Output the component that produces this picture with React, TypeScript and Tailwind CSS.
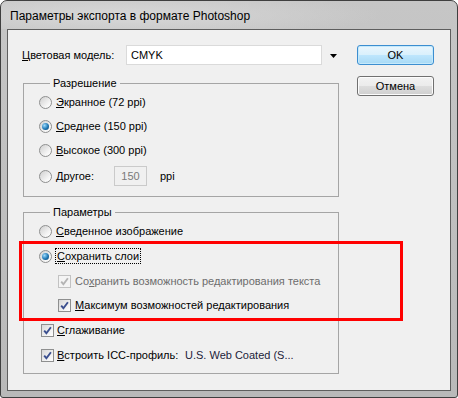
import React from 'react'

const font = { fontFamily: '"Liberation Sans", Arial, sans-serif' }

function Radio({ on }: { on?: boolean }) {
  return (
    <span className="flex h-[13px] w-[13px] shrink-0 items-center justify-center rounded-full border border-[#8e8f8f] bg-[linear-gradient(135deg,#cfcfcf,#f6f6f6_70%,#ffffff)]">
      {on && (
        <span className="h-[7px] w-[7px] rounded-full bg-[radial-gradient(circle_at_35%_35%,#9edcff,#1f78b4_55%,#0b3a63)]" />
      )}
    </span>
  )
}

function Check({ disabled }: { disabled?: boolean }) {
  return (
    <span
      className={`flex h-[13px] w-[13px] shrink-0 items-center justify-center border ${
        disabled
          ? 'border-[#c2c2c2] bg-[#f4f4f4]'
          : 'border-[#8e8f8f] bg-[linear-gradient(135deg,#d8d8d8,#f4f4f4_70%,#ffffff)]'
      }`}
    >
      <svg width="9" height="9" viewBox="0 0 9 9">
        <path
          d="M1.2 4.6 L3.4 7.2 L7.9 1.2"
          fill="none"
          stroke={disabled ? '#b4b4b4' : '#3b4f8f'}
          strokeWidth="1.9"
        />
      </svg>
    </span>
  )
}

function Group({ title, children }: { title: string; children: React.ReactNode }) {
  return (
    <fieldset className="w-[316px] border border-[#a5a5a5] pl-[15px]">
      <legend className="ml-[11px] px-[3px] text-[11px] leading-[14px]">{title}</legend>
      {children}
    </fieldset>
  )
}

export default function App() {
  return (
    <div style={font} className="h-[398px] w-[458px] bg-white text-[11px] text-black">
      <div className="flex h-[398px] w-[458px] flex-col rounded-t-[7px] rounded-b-[3px] border border-[#3f3f3f] bg-[linear-gradient(180deg,#c6c6c6,#b9b9b9)]">
        {/* Title bar */}
        <div className="flex h-[28px] items-center pl-[9px] pt-[2px] text-[12px] text-black bg-[radial-gradient(ellipse_260px_24px_at_120px_14px,#d8d8d8,transparent)] rounded-t-[6px]">
          Параметры экспорта в формате Photoshop
        </div>

        {/* Client area */}
        <div className="relative mx-[6px] mb-[6px] flex h-[362px] border border-[#5e5e5e] bg-[#f0f0f0]">
          {/* Left column */}
          <div className="flex w-[345px] flex-col">
            <div className="mt-[15px] flex h-[20px] items-center pl-[14px]">
              <span className="w-[104px]">
                <u>Ц</u>ветовая модель:
              </span>
              <div className="flex h-[20px] w-[196px] items-center border border-[#dadada] bg-white pl-[4px]">
                CMYK
              </div>
              <svg width="7" height="4" viewBox="0 0 7 4" className="ml-[8px] mt-[2px]">
                <path d="M0 0 H7 L3.5 4 Z" fill="#000" />
              </svg>
            </div>

            <div className="ml-[15px] mt-[11px]">
              <Group title="Разрешение">
                <label className="flex h-[24px] items-center gap-[4px]">
                  <Radio />
                  <span>
                    <u>Э</u>кранное (72 ppi)
                  </span>
                </label>
                <label className="flex h-[24px] items-center gap-[4px]">
                  <Radio on />
                  <span>
                    <u>С</u>реднее (150 ppi)
                  </span>
                </label>
                <label className="flex h-[24px] items-center gap-[4px]">
                  <Radio />
                  <span>
                    <u>В</u>ысокое (300 ppi)
                  </span>
                </label>
                <div className="flex h-[28px] items-center gap-[4px]">
                  <Radio />
                  <span className="w-[54px]">
                    <u>Д</u>ругое:
                  </span>
                  <div className="flex h-[20px] w-[33px] items-center justify-center border border-[#cacaca] text-[#7a7a7a]">
                    150
                  </div>
                  <span className="ml-[9px]">ppi</span>
                </div>
                <div className="h-[6px]" />
              </Group>
            </div>

            <div className="ml-[15px] mt-[8px]">
              <Group title="Параметры">
                <label className="flex h-[24px] items-center gap-[4px]">
                  <Radio />
                  <span>
                    <u>С</u>веденное изображение
                  </span>
                </label>
                <label className="flex h-[26px] items-center gap-[3px]">
                  <Radio on />
                  <span className="border border-dotted border-black px-[1px] leading-[14px]">
                    <u>С</u>охранить слои
                  </span>
                </label>
                <label className="flex h-[25px] items-center gap-[4px] pl-[19px] text-[#6d6d6d]">
                  <Check disabled />
                  <span>
                    Со<u>х</u>ранить возможность редактирования текста
                  </span>
                </label>
                <label className="flex h-[23px] items-center gap-[4px] pl-[19px]">
                  <Check />
                  <span>
                    <u>М</u>аксимум возможностей редактирования
                  </span>
                </label>
                <label className="flex h-[27px] items-center gap-[3px] pl-[2px]">
                  <Check />
                  <span>
                    <u>С</u>глаживание
                  </span>
                </label>
                <div className="flex h-[23px] items-center gap-[3px] pl-[2px]">
                  <Check />
                  <span className="w-[125px]">
                    <u>В</u>строить ICC-профиль:
                  </span>
                  <span className="text-[#1c1c3a]">U.S. Web Coated (S...</span>
                </div>
                <div className="h-[6px]" />
              </Group>
            </div>
          </div>

          {/* Right column */}
          <div className="ml-[4px] mt-[15px] flex w-[77px] flex-col gap-[11px]">
            <button className="h-[20px] rounded-[3px] border border-[#3c8ed0] bg-[linear-gradient(180deg,#eaf6fd,#d9f0fc_50%,#bee6fd_51%,#a7d9f5)] text-[11px] shadow-[inset_0_0_0_1px_#c5e9fb]">
              OK
            </button>
            <button className="h-[20px] rounded-[3px] border border-[#707070] bg-[linear-gradient(180deg,#f2f2f2,#ebebeb_50%,#dddddd_51%,#cfcfcf)] text-[11px] shadow-[inset_0_0_0_1px_#fcfcfc]">
              Отмена
            </button>
          </div>

          {/* Red annotation frame */}
          <div className="pointer-events-none absolute left-[11px] top-[211px] h-[80px] w-[384px] border-[3px] border-[#ff0000]" />
        </div>
      </div>
    </div>
  )
}
